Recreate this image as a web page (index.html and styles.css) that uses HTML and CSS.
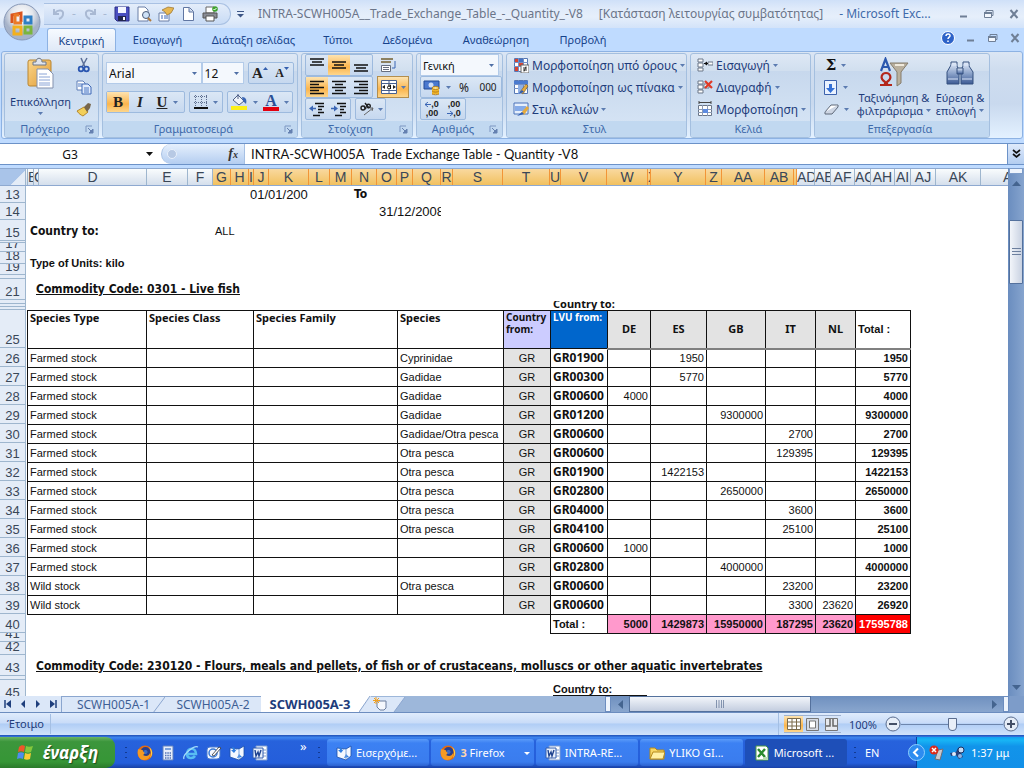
FILE: index.html
```html
<!DOCTYPE html>
<html lang="el">
<head>
<meta charset="utf-8">
<title>INTRA-SCWH005A - Microsoft Excel</title>
<link rel="stylesheet" href="styles.css">
</head>
<body>
<svg class="defs" aria-hidden="true">
<defs>
<linearGradient id="steel" x2="0" y2="1"><stop stop-color="#e8f0fc"/><stop offset=".5" stop-color="#8fa6cc"/><stop offset="1" stop-color="#3c5a94"/></linearGradient>
<linearGradient id="amber" x2="1" y2="1"><stop stop-color="#fbd68a"/><stop offset="1" stop-color="#e09b35"/></linearGradient>
<radialGradient id="orb" cy=".3"><stop stop-color="#fff"/><stop offset=".6" stop-color="#e3e6ec"/><stop offset="1" stop-color="#a6b3c9"/></radialGradient>
<radialGradient id="fox"><stop offset=".3" stop-color="#3a6cc8"/><stop offset=".5" stop-color="#2a3f8c"/></radialGradient>
</defs>
<symbol id="dn" viewBox="0 0 5 3"><path d="M0 0h5L2.500 3z" fill="#5b7bb0"/></symbol>
<symbol id="launch" viewBox="0 0 9 9"><path d="M1 7V1h6" fill="none" stroke="#7d97c2"/><path d="M3 3l4 4M8 4v4H4z" stroke="#6580b0" fill="#6580b0"/></symbol>
<symbol id="al" viewBox="0 0 16 16"><path d="M1 2.500h14M1 5.500h9M1 8.500h14M1 11.500h9M1 14.500h14" stroke="#111" stroke-width="1.300"/></symbol>
<symbol id="ac" viewBox="0 0 16 16"><path d="M1 2.500h14M4 5.500h8M1 8.500h14M4 11.500h8M1 14.500h14" stroke="#111" stroke-width="1.300"/></symbol>
<symbol id="ar" viewBox="0 0 16 16"><path d="M1 2.500h14M6 5.500h9M1 8.500h14M6 11.500h9M1 14.500h14" stroke="#111" stroke-width="1.300"/></symbol>
<symbol id="at" viewBox="0 0 16 16"><path d="M1 2h14M3 5h10M1 8h14" stroke="#111" stroke-width="1.600"/></symbol>
<symbol id="am" viewBox="0 0 16 16"><path d="M1 5h14M3 8h10M1 11h14" stroke="#111" stroke-width="1.600"/></symbol>
<symbol id="ab" viewBox="0 0 16 16"><path d="M1 8h14M3 11h10M1 14h14" stroke="#111" stroke-width="1.600"/></symbol>
<symbol id="ind" viewBox="0 0 16 16"><path d="M6 2.500h9M9 5.500h6M9 8.500h4M9 11.500h6M4 14.500h7" stroke="#111" stroke-width="1.500"/><path d="M0 7.500l4-3v6z" fill="#3b66b5"/><path d="M3 7.500h4" stroke="#3b66b5" stroke-width="1.500"/></symbol>
<symbol id="outd" viewBox="0 0 16 16"><path d="M6 2.500h9M9 5.500h6M9 8.500h4M9 11.500h6M4 14.500h7" stroke="#111" stroke-width="1.500"/><path d="M7 7.500l-4-3v6z" fill="#3b66b5"/><path d="M0 7.500h4" stroke="#3b66b5" stroke-width="1.500"/></symbol>
<symbol id="grid" viewBox="0 0 16 16"><path d="M1.500 1.500h13v13h-13z" fill="#fff" stroke="#5778b4"/><path d="M1 5.500h14M1 9.500h14M5.500 1v14M10.500 1v14" stroke="#7590c4"/></symbol>
<symbol id="firefox" viewBox="0 0 16 16"><circle cx="8" cy="8" r="7.500" fill="#e66a10"/><circle cx="8.500" cy="7" r="5" fill="url(#fox)"/><path d="M1 4c1 1 2 0 4 1 1 0 2 1 1 2 2 0 2 2 0 3 3 2 6 1 7-2 1 4-2 7-6 7C2 15 0 10 1 4z" fill="#f59a23"/><path d="M12 2c4 3 4 8 1 11 1-3 2-6-1-11z" fill="#ffd447"/></symbol>
<symbol id="mail" viewBox="0 0 16 16"><path d="M1 3l9 1 5-3v10l-5 4-9-3z" fill="#f4f8ff" stroke="#1c4fa8" stroke-width=".8"/><path d="M3 2c2 0 3 1 3 3l2-1-3 4-3-3 2 0zM8 13l2-4 3 3" fill="#2f7de0"/><path d="M10 4v10" stroke="#7aa4dd"/></symbol>
<symbol id="word" viewBox="0 0 16 16"><path d="M4 1h11v14H4z" fill="#fff" stroke="#7f9ccf"/><path d="M11 5h3M11 8h3M11 11h3" stroke="#7f9ccf"/><path d="M1 3h10v10H1z" fill="#e9f0fc" stroke="#345fae"/><path d="M3 5l1 6 2-4 1 4 2-6" fill="none" stroke="#1f438f" stroke-width="1.400"/></symbol>
<symbol id="min" viewBox="0 0 12 10"><path d="M2 7.500h7" stroke="#6f7f96" stroke-width="2"/></symbol>
<symbol id="res" viewBox="0 0 12 10"><path d="M3 3V1.500h7v5H9" fill="none" stroke="#6f7f96"/><path d="M1.500 3.500h7v5h-7z" fill="#f3f7fd" stroke="#6f7f96"/><path d="M1 4h8" stroke="#6f7f96" stroke-width="2"/></symbol>
<symbol id="x" viewBox="0 0 12 10"><path d="M2.500 1l7 8M9.500 1l-7 8" stroke="#6f7f96" stroke-width="2"/></symbol>
<symbol id="office" viewBox="0 0 38 38"><circle cx="19" cy="19" r="18" fill="url(#orb)" stroke="#8899b8"/><g fill="none" stroke-width="3"><path d="M9 20v-8l9-2v9" stroke="#d9541e"/><path d="M16 12h-4v8h7" stroke="#eb7a27"/><path d="M22 14h6v6h-6z" stroke="#2f7fc4"/><path d="M11 24h7v7h-7z" stroke="#f3b01c"/><path d="M22 24h6v6h-6z" stroke="#7bb53c"/></g></symbol>
</svg>

<header class="titlebar">
  <button class="b orb" aria-label="Office"><svg width="38" height="38"><use href="#office"/></svg></button>
  <div class="qat">
    <button class="b" aria-label="Undo"><svg width="14" height="14" viewBox="0 0 14 14"><path d="M2 2v5h5M3 6c3-4 9-3 8 1 0 2-2 4-4 5" fill="none" stroke="#a9b9d3" stroke-width="2"/></svg></button><span class="dash">-</span>
    <button class="b" aria-label="Redo"><svg width="14" height="14" viewBox="0 0 14 14"><path d="M12 2v5H7M11 6C8 2 2 3 3 7c0 2 2 4 4 5" fill="none" stroke="#a9b9d3" stroke-width="2"/></svg></button><span class="dash">-</span>
    <button class="b" aria-label="Save"><svg width="16" height="16" viewBox="0 0 16 16"><path d="M1 1h14v14H3l-2-2z" fill="#4a4fc0" stroke="#2b2f86"/><path d="M4 1h8v6H4z" fill="#f4f6ff"/><path d="M4 10h8v5H4z" fill="#22264f"/><path d="M9 11h2v3H9z" fill="#fff"/></svg></button>
    <button class="b" aria-label="Print preview"><svg width="16" height="16" viewBox="0 0 16 16"><path d="M2 1h7l3 3v11H2z" fill="#fff" stroke="#6a7fa6"/><circle cx="10" cy="9" r="3.500" fill="#cfe2f7" stroke="#4a5a78"/><path d="M12 12l3 3" stroke="#b07a3c" stroke-width="2"/></svg></button>
    <button class="b" aria-label="Properties"><svg width="16" height="16" viewBox="0 0 16 16"><path d="M1 7h10v8H1z" fill="#fff" stroke="#6a7fa6"/><path d="M3 10h2M6 10h4M3 12h2M6 12h4" stroke="#3a66b5"/><path d="M4 4l6-3 6 1-3 5-4 2-2-3z" fill="#e7b750" stroke="#96702a" stroke-width=".7"/></svg></button>
    <button class="b" aria-label="New"><svg width="16" height="16" viewBox="0 0 16 16"><path d="M3.500 1.500h6l4 4v9h-10z" fill="#fff" stroke="#6076a2"/><path d="M9 2v4h4" fill="#c9d7ee" stroke="#6076a2"/></svg></button>
    <button class="b" aria-label="Quick print"><svg width="16" height="16" viewBox="0 0 16 16"><path d="M4 1h8v6H4z" fill="#fff" stroke="#666"/><path d="M1 7h14v5H1z" fill="#8a8d96" stroke="#555"/><path d="M4 10h8v5H4z" fill="#fff" stroke="#555"/><circle cx="13" cy="3" r="2.800" fill="#3fa32f"/><path d="M11.500 3l1 1 2-2" fill="none" stroke="#fff"/></svg></button>
  </div>
  <button class="b more" aria-label="Customize"><svg width="7" height="7" viewBox="0 0 7 7"><path d="M0 .5h7" stroke="#3d5686"/><path d="M0 3h7L3.500 6.500z" fill="#3d5686"/></svg></button>
  <h1 class="title"><span>INTRA-SCWH005A__Trade_Exchange_Table_-_Quantity_-V8</span><span>[Κατάσταση λειτουργίας συμβατότητας]</span><span class="app">- Microsoft Exc...</span></h1>
  <div class="winbtns">
    <button class="b" aria-label="Minimize"><svg width="12" height="10"><use href="#min"/></svg></button>
    <button class="b" aria-label="Restore"><svg width="12" height="10"><use href="#res"/></svg></button>
    <button class="b" aria-label="Close"><svg width="12" height="10"><use href="#x"/></svg></button>
  </div>
</header>

<nav class="tabs">
  <button class="b tab on">Κεντρική</button>
  <button class="b tab t2">Εισαγωγή</button>
  <button class="b tab t3">Διάταξη σελίδας</button>
  <button class="b tab t4">Τύποι</button>
  <button class="b tab t5">Δεδομένα</button>
  <button class="b tab t6">Αναθεώρηση</button>
  <button class="b tab t7">Προβολή</button>
  <div class="winbtns">
    <button class="b" aria-label="Help"><svg width="14" height="14" viewBox="0 0 14 14"><circle cx="7" cy="7" r="6.500" fill="#2d62c8" stroke="#fff"/><path d="M5 5c0-3 4.500-2.500 4 0 0 1-2 1.500-2 3M7 9.500v1.500" fill="none" stroke="#fff" stroke-width="1.500"/></svg></button>
    <button class="b" aria-label="Minimize window"><svg width="12" height="10"><use href="#min"/></svg></button>
    <button class="b" aria-label="Restore window"><svg width="12" height="10"><use href="#res"/></svg></button>
    <button class="b" aria-label="Close window"><svg width="12" height="10"><use href="#x"/></svg></button>
  </div>
</nav>

<section class="ribbon">
  <div class="group g-clip">
    <div class="body">
      <button class="b big paste"><svg width="30" height="32" viewBox="0 0 30 32"><rect x="2" y="3" width="23" height="26" rx="2" fill="url(#amber)" stroke="#b98530"/><path d="M7 5h3c0-5 6-5 6 0h4v3H7z" fill="#dfe4ee" stroke="#6d7787"/><path d="M11 12h11l5 5v14H11z" fill="#fff" stroke="#8391ae"/><path d="M13 17h8M13 20h11M13 23h11M13 26h11M13 28h11" stroke="#8aa4d6"/></svg><span>Επικόλληση</span><svg class="dn"><use href="#dn"/></svg></button>
      <div class="col">
        <button class="b ic" aria-label="Cut"><svg width="16" height="16" viewBox="0 0 16 16"><path d="M5 1l4 9M11 1L6 10" stroke="#5b6f98" stroke-width="1.500"/><circle cx="5" cy="12" r="2.300" fill="none" stroke="#2a56b0" stroke-width="1.800"/><circle cx="10.500" cy="12" r="2.300" fill="none" stroke="#2a56b0" stroke-width="1.800"/></svg></button>
        <button class="b ic" aria-label="Copy"><svg width="16" height="16" viewBox="0 0 16 16"><path d="M1 2h6l2 2v7H1z" fill="#fff" stroke="#5f7fb8"/><path d="M6 5h6l3 3v7H6z" fill="#dfeafc" stroke="#3f68b5"/><path d="M8 9h5M8 11h5M8 13h5M2 5h4M2 7h4" stroke="#4d78c4"/></svg></button>
        <button class="b ic" aria-label="Format painter"><svg width="16" height="16" viewBox="0 0 16 16"><path d="M1 10l7-4 4 5-5 4c-2-1-4-2-6-5z" fill="#f2cf5a" stroke="#b4872e"/><path d="M8 6l4-4 3 1-1 4-3 4z" fill="#77664b"/></svg></button>
      </div>
    </div>
    <div class="cap"><span>Πρόχειρο</span><button class="b" aria-label="Clipboard options"><svg width="9" height="9"><use href="#launch"/></svg></button></div>
  </div>

  <div class="group g-font">
    <div class="body rows2">
      <div class="line">
        <select class="sel f1" aria-label="Font"><option>Arial</option></select><select class="sel f2" aria-label="Font size"><option>12</option></select>
        <div class="seg"><button class="b w22 ser">A<svg class="up" viewBox="0 0 5 3"><path d="M0 3h5L2.500 0z" fill="#335fae"/></svg></button><button class="b w22 ser small">A<svg class="up" viewBox="0 0 5 3"><path d="M0 0h5L2.500 3z" fill="#335fae"/></svg></button></div>
      </div>
      <div class="line">
        <div class="seg"><button class="b w22 ser hot">B</button><button class="b w22 ser"><i>I</i></button><button class="b w34 ser"><u>U</u><svg class="dn"><use href="#dn"/></svg></button></div>
        <div class="seg"><button class="b w32" aria-label="Borders"><svg width="14" height="14" viewBox="0 0 14 14"><path d="M1.500 0v13M7.500 0v13M12.500 0v13M0 1.500h13M0 7.500h13" stroke="#5f6f8f" stroke-dasharray="1 1"/><path d="M0 13h14" stroke="#111" stroke-width="2"/></svg><svg class="dn"><use href="#dn"/></svg></button></div>
        <div class="seg"><button class="b w32" aria-label="Fill"><svg width="17" height="18" viewBox="0 0 17 18"><path d="M2 7l5-5 6 6-5 4z" fill="#f0f4fb" stroke="#4c5f86"/><path d="M7 6V1" stroke="#4c5f86"/><path d="M11 4c4 0 5 3 4 7l-3-3z" fill="#3a66b5"/><path d="M0 13h16v4H0z" fill="#fbf019"/></svg><svg class="dn"><use href="#dn"/></svg></button><button class="b w32 fcol"><span>A</span><svg class="dn"><use href="#dn"/></svg></button></div>
      </div>
    </div>
    <div class="cap"><span>Γραμματοσειρά</span><button class="b" aria-label="Font options"><svg width="9" height="9"><use href="#launch"/></svg></button></div>
  </div>

  <div class="group g-align">
    <div class="body rows3">
      <div class="line">
        <div class="seg"><button class="b w22" aria-label="Top"><svg class="i14"><use href="#at"/></svg></button><button class="b w22 hot" aria-label="Middle"><svg class="i14"><use href="#am"/></svg></button><button class="b w22" aria-label="Bottom"><svg class="i14"><use href="#ab"/></svg></button></div>
        <button class="b w22" aria-label="Wrap text"><svg width="16" height="16" viewBox="0 0 16 16"><path d="M1 2h12M1 5h10" stroke="#8d8160" stroke-width="2"/><path d="M1.500 8.500h9v6h-9z" fill="#fff" stroke="#666f80"/><path d="M3 10.500h6M3 12.500h6" stroke="#666f80"/><path d="M15 4v5M12 11h3V9" fill="none" stroke="#3a66b5"/></svg></button>
      </div>
      <div class="line">
        <div class="seg"><button class="b w22 hot" aria-label="Left"><svg class="i14"><use href="#al"/></svg></button><button class="b w22" aria-label="Center"><svg class="i14"><use href="#ac"/></svg></button><button class="b w22" aria-label="Right"><svg class="i14"><use href="#ar"/></svg></button></div>
        <button class="b w32 hot merge" aria-label="Merge"><svg width="16" height="14" viewBox="0 0 16 14"><path d="M.5.500h15v13H.5z" fill="#fff" stroke="#465f8f"/><path d="M0 3.500h16M0 10.500h16M8 0v3M8 11v3" stroke="#465f8f"/><path d="M1 7l3-2v4zM15 7l-3-2v4z" fill="#222"/><circle cx="8" cy="7.500" r="1.500" fill="none" stroke="#111"/><path d="M7 5h2.500v4" fill="none" stroke="#111"/></svg><svg class="dn"><use href="#dn"/></svg></button>
      </div>
      <div class="line">
        <div class="seg"><button class="b w22" aria-label="Decrease indent"><svg class="i14"><use href="#ind"/></svg></button><button class="b w22" aria-label="Increase indent"><svg class="i14"><use href="#outd"/></svg></button></div>
        <div class="seg"><button class="b w30" aria-label="Orientation"><svg width="17" height="15" viewBox="0 0 17 15"><g fill="none" stroke="#222" stroke-width="1.400"><circle cx="4" cy="6" r="2"/><path d="M5 4l2 3M6 1l4 5"/><circle cx="9.500" cy="4" r="1.800"/></g><path d="M5 13L14 6M14 6l-1 3M14 6h-3" stroke="#666" fill="none"/></svg><svg class="dn"><use href="#dn"/></svg></button></div>
      </div>
    </div>
    <div class="cap"><span>Στοίχιση</span><button class="b" aria-label="Alignment options"><svg width="9" height="9"><use href="#launch"/></svg></button></div>
  </div>

  <div class="group g-num">
    <div class="body rows3">
      <div class="line"><select class="sel f3" aria-label="Number format"><option>Γενική</option></select></div>
      <div class="line"><div class="seg"><button class="b w32" aria-label="Currency"><svg width="18" height="17" viewBox="0 0 18 17"><path d="M1 2h15v8H1z" fill="#4a78cf" stroke="#234a97"/><circle cx="8" cy="6" r="2.500" fill="#cddcf6"/><path d="M9 9h7v6H9z" fill="#f0b429"/><ellipse cx="12.500" cy="9" rx="3.500" ry="1.500" fill="#ffe083" stroke="#b9811b"/><path d="M9 12c2 1.500 5 1.500 7 0M9 15c2 1 5 1 7 0" stroke="#b9811b" fill="none"/></svg><svg class="dn"><use href="#dn"/></svg></button><button class="b w22 n">%</button><button class="b w24 n"><span>000</span></button></div></div>
      <div class="line"><div class="seg"><button class="b w22 dec" aria-label="Increase decimal"><span><svg width="6" height="5" viewBox="0 0 6 5"><path d="M0 2.500h6M3 0L0 2.500 3 5" fill="none" stroke="#3b66b5"/></svg>,0</span><span>,00</span></button><button class="b w22 dec" aria-label="Decrease decimal"><span>,00</span><span><svg width="6" height="5" viewBox="0 0 6 5"><path d="M0 2.500h6M3 0l3 2.500L3 5" fill="none" stroke="#3b66b5"/></svg>,0</span></button></div></div>
    </div>
    <div class="cap"><span>Αριθμός</span><button class="b" aria-label="Number options"><svg width="9" height="9"><use href="#launch"/></svg></button></div>
  </div>

  <div class="group g-style">
    <div class="body rows3">
      <button class="b cmd"><svg width="16" height="16" viewBox="0 0 16 16"><use href="#grid"/><path d="M2 2h3v3H2zM6 6h4v3H6zM2 10h3v4H2z" fill="#d9442f"/><path d="M6 2h4v3H6z" fill="#4472c4"/><path d="M8 8h8v8H8z" fill="#fff" stroke="#666"/><path d="M10 11h4M10 13h4M13 9.500l-2 5" stroke="#333"/></svg>Μορφοποίηση υπό όρους<svg class="dn"><use href="#dn"/></svg></button>
      <button class="b cmd"><svg width="16" height="16" viewBox="0 0 16 16"><use href="#grid"/><path d="M1 2h14v3H1z" fill="#4b7bd0"/><path d="M5 6h5v9H5z" fill="#8fb0e6"/><path d="M7 13l6-8 2 2-5 8z" fill="#e5aa3d" stroke="#6b5a35" stroke-width=".6"/><path d="M5 15l4-4 2 2z" fill="#2c5bb5"/></svg>Μορφοποίηση ως πίνακα<svg class="dn"><use href="#dn"/></svg></button>
      <button class="b cmd"><svg width="16" height="16" viewBox="0 0 16 16"><path d="M1 2h14v11H1z" fill="#e6effc" stroke="#4b73b9"/><path d="M2 5h11v5H2z" fill="#86abe8"/><path d="M8 12l6-7 2 2-5 7z" fill="#e5aa3d"/><path d="M4 15l5-4 2 2z" fill="#2c5bb5"/></svg>Στυλ κελιών<svg class="dn"><use href="#dn"/></svg></button>
    </div>
    <div class="cap"><span>Στυλ</span></div>
  </div>

  <div class="group g-cells">
    <div class="body rows3">
      <button class="b cmd"><svg width="16" height="16" viewBox="0 0 16 16"><path d="M1 2h5v3H1zM1 6h5v4H1zM1 11h5v3H1zM11 5h5v3h-5z" fill="#fff" stroke="#6b7688"/><path d="M7 6.500h4" stroke="#111"/><path d="M7 6.500l3-2v4z" fill="#111"/></svg>Εισαγωγή<svg class="dn"><use href="#dn"/></svg></button>
      <button class="b cmd"><svg width="16" height="16" viewBox="0 0 16 16"><path d="M1 2h5v3H1zM1 6h5v4H1zM1 11h5v3H1zM7 5h5v4H7z" fill="#fff" stroke="#6b7688"/><path d="M8 2l7 7M15 2L8 9" stroke="#e03a25" stroke-width="2.200"/></svg>Διαγραφή<svg class="dn"><use href="#dn"/></svg></button>
      <button class="b cmd"><svg width="16" height="16" viewBox="0 0 16 16"><path d="M1.500 4.500h13v10h-13z" fill="#fff" stroke="#6b7688"/><path d="M1 8.500h14M1 11.500h14M5.500 4v11M10.500 4v11" stroke="#8b9ab5"/><path d="M6 8h5v4H6z" fill="#5d8be0"/><path d="M2 1.500h12M2 0v3M14 0v3" stroke="#444"/></svg>Μορφοποίηση<svg class="dn"><use href="#dn"/></svg></button>
    </div>
    <div class="cap"><span>Κελιά</span></div>
  </div>

  <div class="group g-edit">
    <div class="body">
      <div class="col wide">
        <button class="b ic sum">Σ<svg class="dn"><use href="#dn"/></svg></button>
        <button class="b ic" aria-label="Fill down"><svg width="14" height="15" viewBox="0 0 14 15"><path d="M.5.500h12v14H.5z" fill="#eaf2ff" stroke="#3c62ad"/><path d="M5 4h3v4h3l-4.500 5L2 8h3z" fill="#3470d6"/></svg><svg class="dn"><use href="#dn"/></svg></button>
        <button class="b ic" aria-label="Clear"><svg width="15" height="14" viewBox="0 0 15 14"><path d="M1 10l6-7h7l-6 7z" fill="#fff" stroke="#5e6878"/><path d="M1 10v2h7l6-7V3" fill="#cdd5e3" stroke="#5e6878"/></svg><svg class="dn"><use href="#dn"/></svg></button>
      </div>
      <button class="b big sort"><svg width="32" height="32" viewBox="0 0 32 32"><path d="M12 6h18l-7 9v11l-4 3V15z" fill="#b9b09e" stroke="#857c6c"/><path d="M17 8h9" stroke="#efe9dc" stroke-width="2"/><path d="M3 14L7.500 2 12 14M5 10h5" fill="none" stroke="#2c58ae" stroke-width="2.200"/><path d="M2 28h5v-3c-6-4-3-9 1-9s7 5 1 9v3h5" fill="none" stroke="#b3261b" stroke-width="2.200"/></svg><span>Ταξινόμηση &amp;</span><span>φιλτράρισμα<svg class="dn"><use href="#dn"/></svg></span></button>
      <button class="b big find"><svg width="30" height="32" viewBox="0 0 30 32"><g fill="url(#steel)" stroke="#34507f"><path d="M6 5h6v4l2 4v14H2V15l4-7zM18 5h6v4l4 6v12H16V13l2-4z"/><path d="M12 11h6v6h-6z"/></g><path d="M3 22h10M17 22h10M6 8h6M18 8h6" stroke="#dbe7fa"/></svg><span>Εύρεση &amp;</span><span>επιλογή<svg class="dn"><use href="#dn"/></svg></span></button>
    </div>
    <div class="cap"><span>Επεξεργασία</span></div>
  </div>
</section>

<section class="formula">
  <input class="name" aria-label="Name box" value="G3"><svg class="namearrow" viewBox="0 0 7 4"><path d="M0 0h7L3.500 4z" fill="#111"/></svg>
  <div class="fx"><span class="knob"></span><span class="f">f<small>x</small></span></div>
  <input class="expr" aria-label="Formula" value="INTRA-SCWH005A  Trade Exchange Table - Quantity -V8">
  <button class="b expand" aria-label="Expand"><svg width="9" height="10" viewBox="0 0 9 10"><path d="M1 1l3.500 3L8 1M1 5l3.500 3L8 5" fill="none" stroke="#111" stroke-width="1.700"/></svg></button>
</section>

<main class="work">
  <div class="sheetcol">
    <div class="cols">
      <span class="corner"></span><span></span><span>B</span><span>C</span><span>D</span><span>E</span><span>F</span><span class="s">G</span><span class="s">H</span><span class="s">I</span><span class="s">J</span><span class="s">K</span><span class="s">L</span><span class="s">M</span><span class="s">N</span><span class="s">O</span><span class="s">P</span><span class="s">Q</span><span class="s">R</span><span class="s">S</span><span class="s">T</span><span class="s">U</span><span class="s">V</span><span class="s">W</span><span class="s">X</span><span class="s">Y</span><span class="s">Z</span><span class="s">AA</span><span class="s">AB</span><span class="s"></span><span>AD</span><span>AE</span><span>AF</span><span>AG</span><span>AH</span><span>AI</span><span>AJ</span><span>AK</span><span class="last">AL</span>
    </div>
    <div class="sheet">
      <div class="nums">
        <span class="h17">13</span><span class="h17">14</span><span class="h21">15</span><span class="h2"></span><span class="h9">17</span><span class="h12">18</span><span class="h11">19</span><span class="h4"></span><span class="h21">21</span><span class="h4"></span><span class="h3"></span><span class="h3"></span><span class="h38">25</span><span>26</span><span>27</span><span>28</span><span>29</span><span>30</span><span>31</span><span>32</span><span>33</span><span>34</span><span>35</span><span>36</span><span>37</span><span>38</span><span>39</span><span>40</span><span class="h9">41</span><span class="h13">42</span><span class="h21">43</span><span class="h4"></span><span class="h21">45</span>
      </div>
      <div class="cells">
        <div class="dates h17"><span class="from">01/01/2008</span><b>To</b></div>
        <div class="dates h17"><span class="until">31/12/2008</span></div>
        <div class="where"><b class="tah">Country to:</b><span>ALL</span></div>
        <div class="units">Type of Units: kilo</div>
        <h2 class="code">Commodity Code: 0301 - Live fish</h2>
        <div class="cut"><span>Country to:</span></div>
        <table>
          <colgroup><col class="c119"><col class="c107"><col class="c144"><col class="c106"><col class="c47"><col class="c57"><col class="c43"><col class="c56"><col class="c59"><col class="c50"><col class="c40"><col class="c55"></colgroup>
          <thead><tr><th>Species Type</th><th>Species Class</th><th>Species Family</th><th>Species</th><th class="ctry">Country from:</th><th class="lvu">LVU from:</th><th class="k">DE</th><th class="k">ES</th><th class="k">GB</th><th class="k">IT</th><th class="k">NL</th><th class="tot">Total :</th></tr></thead>
          <tbody>
          <tr><td>Farmed stock</td><td></td><td></td><td>Cyprinidae</td><td>GR</td><td>GR01900</td><td></td><td>1950</td><td></td><td></td><td></td><td>1950</td></tr>
          <tr><td>Farmed stock</td><td></td><td></td><td>Gadidae</td><td>GR</td><td>GR00300</td><td></td><td>5770</td><td></td><td></td><td></td><td>5770</td></tr>
          <tr><td>Farmed stock</td><td></td><td></td><td>Gadidae</td><td>GR</td><td>GR00600</td><td>4000</td><td></td><td></td><td></td><td></td><td>4000</td></tr>
          <tr><td>Farmed stock</td><td></td><td></td><td>Gadidae</td><td>GR</td><td>GR01200</td><td></td><td></td><td>9300000</td><td></td><td></td><td>9300000</td></tr>
          <tr><td>Farmed stock</td><td></td><td></td><td>Gadidae/Otra pesca</td><td>GR</td><td>GR00600</td><td></td><td></td><td></td><td>2700</td><td></td><td>2700</td></tr>
          <tr><td>Farmed stock</td><td></td><td></td><td>Otra pesca</td><td>GR</td><td>GR00600</td><td></td><td></td><td></td><td>129395</td><td></td><td>129395</td></tr>
          <tr><td>Farmed stock</td><td></td><td></td><td>Otra pesca</td><td>GR</td><td>GR01900</td><td></td><td>1422153</td><td></td><td></td><td></td><td>1422153</td></tr>
          <tr><td>Farmed stock</td><td></td><td></td><td>Otra pesca</td><td>GR</td><td>GR02800</td><td></td><td></td><td>2650000</td><td></td><td></td><td>2650000</td></tr>
          <tr><td>Farmed stock</td><td></td><td></td><td>Otra pesca</td><td>GR</td><td>GR04000</td><td></td><td></td><td></td><td>3600</td><td></td><td>3600</td></tr>
          <tr><td>Farmed stock</td><td></td><td></td><td>Otra pesca</td><td>GR</td><td>GR04100</td><td></td><td></td><td></td><td>25100</td><td></td><td>25100</td></tr>
          <tr><td>Farmed stock</td><td></td><td></td><td></td><td>GR</td><td>GR00600</td><td>1000</td><td></td><td></td><td></td><td></td><td>1000</td></tr>
          <tr><td>Farmed stock</td><td></td><td></td><td></td><td>GR</td><td>GR02800</td><td></td><td></td><td>4000000</td><td></td><td></td><td>4000000</td></tr>
          <tr><td>Wild stock</td><td></td><td></td><td>Otra pesca</td><td>GR</td><td>GR00600</td><td></td><td></td><td></td><td>23200</td><td></td><td>23200</td></tr>
          <tr><td>Wild stock</td><td></td><td></td><td></td><td>GR</td><td>GR00600</td><td></td><td></td><td></td><td>3300</td><td>23620</td><td>26920</td></tr>
          </tbody>
          <tfoot><tr><td class="none" colspan="5"></td><td class="tl">Total :</td><td>5000</td><td>1429873</td><td>15950000</td><td>187295</td><td>23620</td><td class="grand">17595788</td></tr></tfoot>
        </table>
        <h2 class="code second">Commodity Code: 230120 - Flours, meals and pellets, of fish or of crustaceans, molluscs or other aquatic invertebrates</h2>
        <div class="again"><span>Country to:</span></div>
      </div>
    </div>
  </div>
  <div class="vscroll">
    <span class="split"></span>
    <button class="b" aria-label="Scroll up"><svg width="9" height="5" viewBox="0 0 9 5"><path d="M0 5h9L4.500 0z" fill="#44648f"/></svg></button>
    <span class="thumb"><svg width="9" height="8" viewBox="0 0 9 8"><path d="M0 .5h9M0 3.500h9M0 6.500h9" stroke="#6c7f9e"/></svg></span>
    <button class="b end" aria-label="Scroll down"><svg width="9" height="5" viewBox="0 0 9 5"><path d="M0 0h9L4.500 5z" fill="#44648f"/></svg></button>
  </div>
</main>

<div class="sheetbar">
  <div class="navs">
    <button class="b" aria-label="First sheet"><svg width="8" height="8" viewBox="0 0 8 8"><path d="M1 0v8" stroke="#1f3f7d" stroke-width="1.500"/><path d="M7 0v8L2 4z" fill="#1f3f7d"/></svg></button>
    <button class="b" aria-label="Previous sheet"><svg width="8" height="8" viewBox="0 0 8 8"><path d="M6 0v8L2 4z" fill="#1f3f7d"/></svg></button>
    <button class="b" aria-label="Next sheet"><svg width="8" height="8" viewBox="0 0 8 8"><path d="M2 0v8l4-4z" fill="#1f3f7d"/></svg></button>
    <button class="b" aria-label="Last sheet"><svg width="8" height="8" viewBox="0 0 8 8"><path d="M1 0v8l5-4z" fill="#1f3f7d"/><path d="M7 0v8" stroke="#1f3f7d" stroke-width="1.500"/></svg></button>
  </div>
  <button class="b stab w103"><span>SCWH005A-1</span><svg class="slope" viewBox="0 0 12 16"><path d="M0 16L12 0v16z" fill="#dbe7f8"/><path d="M0 16L12 0" stroke="#8ba6cf"/></svg></button>
  <button class="b stab w95"><span>SCWH005A-2</span></button>
  <button class="b stab cur"><span>SCWH005A-3</span></button>
  <button class="b newtab" aria-label="New sheet"><svg width="48" height="16" viewBox="0 0 48 16"><path d="M0 0h12L0 16z" fill="#fff"/><path d="M0 16L11 1h35L35 16z" fill="#dbe7f8"/><path d="M0 16L11 0M35 16L46 1" stroke="#8ba6cf"/><path d="M18 5h9v7l-2 2h-4l-3-3z" fill="#f5f8fd" stroke="#6d7f9e"/><path d="M17 1v7M14 4.500h7M15 2l5 5M20 2l-5 5" stroke="#f0a020"/></svg></button>
  <div class="fillbar"></div>
  <span class="split2"></span>
  <div class="hscroll">
    <button class="b" aria-label="Scroll left"><svg width="5" height="9" viewBox="0 0 5 9"><path d="M5 0v9L0 4.500z" fill="#44648f"/></svg></button>
    <span class="hthumb"><svg width="8" height="8" viewBox="0 0 8 8"><path d="M.5 0v8M3 0v8M5.500 0v8M7.500 0v8" stroke="#6c7f9e" stroke-width=".8"/></svg></span>
    <button class="b end" aria-label="Scroll right"><svg width="5" height="9" viewBox="0 0 5 9"><path d="M0 0v9l5-4.500z" fill="#44648f"/></svg></button>
  </div>
  <span class="split2"></span>
  <span class="cornerbox"></span>
</div>

<footer class="status">
  <span class="ready">Έτοιμο</span>
  <div class="views">
    <button class="b hot" aria-label="Normal"><svg width="14" height="12" viewBox="0 0 14 12"><path d="M.5.500h13v11H.5zM0 4h14M0 8h14M5 0v12M9.500 0v12" fill="#fff" stroke="#7a6a4a"/></svg></button>
    <button class="b" aria-label="Page layout"><svg width="13" height="13" viewBox="0 0 13 13"><path d="M.5.500h12v12H.5z" fill="#d6dbe4" stroke="#777"/><path d="M3.500 3h6v7h-6z" fill="#fff" stroke="#777"/></svg></button>
    <button class="b" aria-label="Page break"><svg width="13" height="13" viewBox="0 0 13 13"><path d="M.5.500h12v12H.5z" fill="#e6e9ee" stroke="#777"/><path d="M1 8h4V1M8 1v7h4" fill="none" stroke="#666" stroke-width="1.500"/></svg></button>
  </div>
  <span class="pct">100%</span>
  <button class="b" aria-label="Zoom out"><svg width="16" height="16" viewBox="0 0 16 16"><circle cx="8" cy="8" r="7" fill="#e6edf7" stroke="#5a6d8f"/><path d="M4 8h8" stroke="#444f66" stroke-width="2"/></svg></button>
  <input class="zoom" type="range" aria-label="Zoom" min="0" max="200" value="100">
  <button class="b" aria-label="Zoom in"><svg width="16" height="16" viewBox="0 0 16 16"><circle cx="8" cy="8" r="7" fill="#e6edf7" stroke="#5a6d8f"/><path d="M4 8h8M8 4v8" stroke="#444f66" stroke-width="2"/></svg></button>
</footer>

<footer class="taskbar">
  <button class="b start"><svg width="18" height="17" viewBox="0 0 18 17"><path d="M2 3c2-2 4-2 6-1L7 8C5 7 3 7 1 8z" fill="#f0562a"/><path d="M9 2c2 1 4 1 7 0l-2 6c-2 1-4 1-6 0z" fill="#86c83c"/><path d="M1 9c2-1 4-1 6 0l-1 6c-2-1-4-1-6 0z" fill="#4f8df0"/><path d="M8 9c2 1 4 1 6 0l-1 6c-2 1-4 1-6 0z" fill="#fbcb35"/></svg><span>έναρξη</span></button>
  <span class="grip"></span>
  <div class="quick">
    <button class="b" aria-label="Firefox"><svg width="16" height="16"><use href="#firefox"/></svg></button>
    <button class="b" aria-label="Calculator"><svg width="16" height="16" viewBox="0 0 16 16"><path d="M3 1h10v14H3z" fill="#e8eefb" stroke="#6382bd"/><path d="M5 3h6v2H5z" fill="#7ea3dd"/><path d="M5 8h6M5 10.500h6M5 13h6" stroke="#5173b5" stroke-width="1.500" stroke-dasharray="1.500 .8"/></svg></button>
    <button class="b" aria-label="Internet Explorer"><svg width="16" height="16" viewBox="0 0 16 16"><path d="M3 9h10c0-7-9-7-9 0 0 5 6 5 8 2" fill="none" stroke="#58bdf2" stroke-width="2.600"/><path d="M1 14C-1 10 11 0 15 2" fill="none" stroke="#a5dcfa" stroke-width="1.300"/></svg></button>
    <button class="b" aria-label="Desktop"><svg width="16" height="16" viewBox="0 0 16 16"><rect x="1" y="2" width="13" height="12" rx="3" fill="#f5f9ff" stroke="#4b7dd0"/><circle cx="7" cy="8" r="4" fill="none" stroke="#3a7bd8" stroke-width="1.500"/><path d="M6 10l7-8 2 1-7 8z" fill="#fff" stroke="#333" stroke-width=".8"/></svg></button>
    <button class="b" aria-label="Mail"><svg width="16" height="16"><use href="#mail"/></svg></button>
    <button class="b" aria-label="Word"><svg width="16" height="16"><use href="#word"/></svg></button>
  </div>
  <span class="chev">»</span>
  <span class="grip"></span>
  <div class="tasks">
    <button class="b task"><svg width="16" height="16"><use href="#mail"/></svg><span>Εισερχόμε...</span></button>
    <button class="b task"><svg width="16" height="16"><use href="#firefox"/></svg><span><b>3</b> Firefox</span><svg class="caret" viewBox="0 0 6 3"><path d="M0 0h6L3 3z" fill="#fff"/></svg></button>
    <button class="b task"><svg width="16" height="16"><use href="#word"/></svg><span>INTRA-RE...</span></button>
    <button class="b task"><svg width="16" height="16" viewBox="0 0 16 16"><path d="M1 3h5l2 2h7v9H1z" fill="#f6d664" stroke="#b58a1d"/><path d="M1 14l3-7h12l-2 7z" fill="#fff0a3" stroke="#b58a1d"/></svg><span>YLIKO GI...</span></button>
    <button class="b task active"><svg width="16" height="16" viewBox="0 0 16 16"><path d="M2 1h10l2 2v12H2z" fill="#fff" stroke="#4d9a45"/><path d="M4 4l7 8M11 4l-7 8" stroke="#2a8a2e" stroke-width="2.400"/><path d="M9 12h5v3H9z" fill="#b6dbb0"/></svg><span>Microsoft ...</span></button>
  </div>
  <span class="grip near"></span>
  <span class="lang">EN</span>
  <div class="tray">
    <button class="b hide" aria-label="Hide icons"><svg width="17" height="17" viewBox="0 0 17 17"><circle cx="8.500" cy="8.500" r="8" fill="#2d8cf0" stroke="#8fd0ff"/><path d="M10 4.500l-4 4 4 4" fill="none" stroke="#fff" stroke-width="2"/></svg></button>
    <svg width="16" height="16" viewBox="0 0 16 16"><path d="M6 14l3-9 5-1-3 11z" fill="#c9c9cf" stroke="#6d6d78"/><circle cx="5" cy="5" r="4.500" fill="#dd2a1b"/><path d="M3 3l4 4M7 3L3 7" stroke="#fff" stroke-width="1.500"/></svg>
    <svg width="16" height="14" viewBox="0 0 16 14"><path d="M1 7l6-1 2-4 5 1-2 4 2 4-4 2-3-4-5 1z" fill="#27427c"/><circle cx="12" cy="4" r="3" fill="#c8dcf4" stroke="#1a2f60"/><circle cx="5" cy="8" r="2" fill="#dfeaf8"/><circle cx="11" cy="10" r="2" fill="#8fb5e4"/></svg>
    <span class="time">1:37 μμ</span>
  </div>
</footer>
</body>
</html>
```

FILE: styles.css
```css
* { box-sizing: border-box; }
body {
  margin: 0;
  height: 100vh;
  display: flex;
  flex-direction: column;
  overflow: hidden;
  background: #bfdbff;
  font-family: "Noto Sans", "Open Sans", sans-serif;
  font-size: 12px;
  color: #1e3c7b;
}
.defs { position: absolute; width: 0; height: 0; }
.b { border: 0; padding: 0; margin: 0; background: none; font: inherit; color: inherit; display: flex; align-items: center; justify-content: center; white-space: nowrap; }
svg { flex: none; display: block; }
.dn { width: 5px; height: 3px; }

/* title bar */
.titlebar { height: 28px; flex: none; display: flex; align-items: center; background: linear-gradient(#cfe0f8, #dfeafa 30%, #e6effb 60%, #d3e3f9); position: relative; padding-right: 4px; }
.orb { position: absolute; left: 3px; top: 3px; z-index: 2; }
.qat { display: flex; align-items: center; gap: 6px; width: 187px; height: 22px; margin-left: 44px; padding-left: 8px; border: 1px solid #a9c1e3; border-left: 0; border-radius: 0 11px 11px 0; background: linear-gradient(#e4edfa, #c8dbf5); }
.dash { width: 4px; color: #a9b9d3; line-height: 16px; }
.dash + .b { margin-left: 1px; }
.more { margin: 0 14px 0 6px; }
.title { margin: 0; flex: 1; min-width: 0; overflow: hidden; display: flex; gap: 16px; font-size: 12px; line-height: 18px; font-weight: 400; color: #6b7589; white-space: nowrap; }
.title .app { color: #3e6aaa; }
.winbtns { margin-left: auto; display: flex; gap: 13px; align-items: center; }

/* ribbon tabs */
.tabs { height: 23px; flex: none; display: flex; padding: 0 3px 0 47px; background: #bfdbff; font-size: 11px; }
.tab { height: 23px; padding: 0 6px; color: #15428b; }
.tab.on { width: 69px; background: linear-gradient(#f6faff, #dfe9f7); border: 1px solid #8db2e3; border-bottom: 0; border-radius: 3px 3px 0 0; }
.t2 { width: 83px; }
.t3 { width: 109px; }
.t4 { width: 60px; }
.t5 { width: 79px; }
.t6 { width: 98px; }
.t7 { width: 76px; }
.tabs .winbtns { gap: 10px; height: 20px; }

/* ribbon */
.ribbon { height: 88px; flex: none; display: flex; gap: 3px; margin: 0 1px; padding: 1px 2px 0; border: 1px solid #8db2e3; border-radius: 3px; background: linear-gradient(#dbe6f4, #cfddef 20%, #c9d9ee 60%, #e3f1ff); }
.group { flex: none; display: flex; flex-direction: column; border: 1px solid #a4bfdf; border-radius: 3px; overflow: hidden; background: linear-gradient(#dee8f5, #d1dfef 20%, #c7d8ed 21%, #d8e6f6); }
.g-clip { width: 95px; }
.g-font { width: 196px; }
.g-align { width: 112px; }
.g-num { width: 87px; }
.g-style { width: 181px; }
.g-cells { width: 121px; }
.g-edit { width: 176px; }
.body { flex: 1; display: flex; padding: 0 3px; }
.cap { height: 16px; flex: none; display: flex; align-items: center; background: #c1d8f0; color: #3e6aaa; padding-right: 4px; font-size: 11px; line-height: 16px; }
.cap span { flex: 1; text-align: center; }
.big { flex-direction: column; justify-content: flex-start; line-height: 13px; font-size: 11px; }
.big span { display: flex; align-items: center; gap: 3px; }
.paste { width: 66px; padding-top: 3px; gap: 4px; }
.col { display: flex; flex-direction: column; }
.ic { height: 22px; width: 22px; gap: 5px; }
.wide .ic { width: 36px; }
.sum { font: bold 15px "DejaVu Serif", serif; color: #111; }
.sort { width: 80px; padding-top: 3px; }
.find { width: 52px; padding-top: 3px; }
.big > svg:first-child { margin-bottom: 2px; }
.rows2 { flex-direction: column; gap: 7px; padding-top: 8px; }
.rows3 { flex-direction: column; }
.line { display: flex; gap: 4px; height: 22px; flex: none; align-items: center; }
.seg { display: flex; height: 22px; border: 1px solid #9dbade; border-radius: 2px; background: linear-gradient(#dbe7f5, #c6d8ef); }
.seg .b { height: 20px; }
.w22 { width: 22px; }
.w24 { width: 26px; }
.w30 { width: 29px; gap: 2px; }
.w32 { width: 32px; gap: 5px; }
.w34 { width: 33px; gap: 6px; }
.merge { height: 22px; border: 1px solid #b38e4e; gap: 4px; }
.hot { background: linear-gradient(#fde3b0, #fbb54d 60%, #fdd68c); }
.i14 { width: 16px; height: 16px; }
.sel { appearance: none; height: 22px; border: 1px solid #b3cbe9; border-radius: 0; padding: 0 4px; margin: 0; font: 12px "Noto Sans", sans-serif; color: #111; background: #f4f8fd url("data:image/svg+xml,%3Csvg xmlns='http://www.w3.org/2000/svg' width='5' height='3'%3E%3Cpath d='M0 0h5L2.500 3z' fill='%234f6fa5'/%3E%3C/svg%3E") no-repeat right 4px center; }
.f1 { width: 97px; padding-left: 2px; }
.f2 { width: 43px; padding-left: 2px; margin-left: -4px; }
.f3 { width: 80px; padding-left: 2px; font-size: 11px; }
.ser { font: bold 15px "Liberation Serif", serif; color: #222; }
.ser.small { font-size: 12px; }
.up { width: 5px; height: 3px; margin-bottom: 9px; }
.fcol span { font: bold 16px/13px "Liberation Serif", serif; color: #2b4f97; border-bottom: 4px solid #e3000f; padding: 0 2px; }
.n { font-size: 12px; color: #222; }
.n span { font-size: 10px; }
.dec { flex-direction: column; font: bold 9px/9px "Liberation Sans", sans-serif; color: #222; }
.dec span { display: flex; align-items: center; }
.g-style .body, .g-cells .body { padding-left: 6px; }
.cmd { height: 22px; gap: 3px; justify-content: flex-start; align-self: flex-start; }

/* formula bar */
.formula { flex: none; height: 22px; margin: 4px 0 3px; display: flex; border: 1px solid #6c92c8; border-width: 1px 0; background: #fff; align-items: stretch; }
.formula input { border: 0; padding: 0; background: #fff; color: #111; font: 12px "Noto Sans", sans-serif; outline: 0; min-width: 0; }
.formula .name { width: 140px; text-align: center; }
.namearrow { width: 7px; height: 4px; margin: 8px 8px 0 6px; }
.fx { width: 84px; display: flex; align-items: center; justify-content: space-between; padding: 0 6px 0 5px; border-radius: 10px 0 0 10px; border: 1px solid #a6c0e4; border-width: 0 1px; background: linear-gradient(#e6f0fd, #b4cdf0); }
.knob { width: 10px; height: 10px; border-radius: 50%; background: #b7c9e4; border: 1px solid #e8f0fb; }
.f { font: italic bold 14px "Liberation Serif", serif; color: #333; }
.f small { font-size: 10px; }
.formula .expr { flex: 1; padding-left: 6px; font: 13px Lato, sans-serif; white-space: pre; }
.expand { width: 17px; background: linear-gradient(#dfeafb, #b3cdf0); border-left: 1px solid #6c92c8; }

/* worksheet */
.work { flex: 1; min-height: 0; display: flex; }
.sheetcol { flex: 1; min-width: 0; display: flex; flex-direction: column; background: #fff; }
.cols { height: 18px; flex: none; display: grid; grid-template-columns: 26px 2px 6px 5px 108px 41px 25px 18px 18px 5px 15px 40px 21px 22px 25px 20px 16px 28px 12px 50px 47px 11px 46px 41px 3px 55px 16px 43px 29px 3px 18px 16px 24px 16px 24px 16px 25px 45px 1fr; border: 1px solid #8ea9d0; border-width: 1px 0; background: #e4ecf7; }
.cols span { display: flex; justify-content: safe center; align-items: center; overflow: hidden; border-right: 1px solid #9eb6ce; background: linear-gradient(#f9fcfd, #d5dfec); font: 14px/16px "Liberation Sans", Arial, sans-serif; color: #3a4757; min-width: 0; }
.cols .s { background: linear-gradient(#f9d99f, #f1c15f); border-right-color: #f29536; }
.cols .corner { background: linear-gradient(135deg, #a9c4e9 65%, #e4ecf7 66%); }
.cols .last { justify-content: flex-start; padding-left: 22px; border: 0; }
.sheet { flex: 1; min-height: 0; display: flex; overflow: hidden; }
.nums { width: 26px; flex: none; background: #e4ecf7; border-right: 1px solid #9eb6ce; font: 13px/14px "Liberation Sans", Arial, sans-serif; color: #3a4757; }
.nums span { display: flex; height: 19px; align-items: flex-end; justify-content: center; overflow: hidden; border-bottom: 1px solid #9eb6ce; }
.nums .h2 { height: 2px; }
.nums .h3 { height: 3px; }
.nums .h4 { height: 4px; }
.nums .h9 { height: 9px; }
.nums .h11 { height: 11px; }
.nums .h12 { height: 12px; }
.nums .h13 { height: 13px; }
.h17, .nums .h17 { height: 17px; }
.nums .h21 { height: 21px; }
.nums .h38 { height: 38px; }
.cells { flex: 1; min-width: 0; overflow: hidden; color: #111; font: 11px/14px "Liberation Sans", Arial, sans-serif; }
.dates { display: flex; font-size: 13px; line-height: 17px; }
.from { margin-left: 224px; width: 58px; overflow: hidden; }
.dates b { margin-left: 46px; font: bold 12px/17px "DejaVu Sans Condensed", "Noto Sans", sans-serif; }
.until { margin-left: 353px; width: 62px; overflow: hidden; }
.tah, .code { font-family: "DejaVu Sans Condensed", "Noto Sans", sans-serif; font-size: 12px; font-weight: 700; }
.where { display: grid; grid-template-columns: 185px 1fr; height: 21px; padding-left: 4px; align-items: center; }
.units { padding: 15px 0 0 4px; height: 38px; font: bold 11px/14px "Liberation Sans", sans-serif; }
.code { margin: 0; padding-left: 10px; line-height: 20px; height: 22px; text-decoration: underline; white-space: nowrap; }
.cut { height: 9px; overflow: hidden; padding-left: 527px; font: bold 11px/5px "Noto Sans", sans-serif; }
.code.second { padding-top: 22px; height: 48px; }
.again { padding-left: 527px; font-weight: 700; }
.again span { display: inline-block; width: 94px; border-bottom: 1px solid #111; line-height: 11px; }
table { border-collapse: collapse; table-layout: fixed; width: 884px; margin-left: 1px; }
.c119 { width: 119px; }
.c107 { width: 107px; }
.c144 { width: 144px; }
.c106 { width: 106px; }
.c47 { width: 47px; }
.c57 { width: 57px; }
.c43 { width: 43px; }
.c56 { width: 56px; }
.c59 { width: 59px; }
.c50 { width: 50px; }
.c40 { width: 40px; }
.c55 { width: 55px; }
th, td { border: 1px solid #111; padding: 0 2px; height: 19px; line-height: 14px; text-align: right; white-space: nowrap; }
thead th { height: 38px; vertical-align: top; text-align: left; font: bold 11px/14px "Noto Sans", sans-serif; }
thead .ctry { background: #ccccff; white-space: normal; font-size: 10px; line-height: 12px; }
thead .lvu { background: #0066cc; color: #fff; font-size: 10px; line-height: 12px; }
thead .k { background: #e3e3e3; text-align: center; vertical-align: middle; border-bottom: 2px solid #808080; }
thead .tot { vertical-align: middle; border-bottom: 2px solid #808080; font: bold 11px/14px "Liberation Sans", sans-serif; }
tbody td:nth-child(-n+4) { text-align: left; }
tbody td:nth-child(5) { text-align: center; background: #e3e3e3; }
tbody td:nth-child(6) { text-align: left; font: bold 12px/14px "Noto Sans", sans-serif; }
tbody td:last-child { font-weight: 700; }
tfoot td { background: #ff99cc; font-weight: 700; }
tfoot .none { border: 0; background: none; }
tfoot .tl { background: #fff; text-align: left; }
tfoot .grand { background: #ff0000; color: #fff; }

.vscroll { width: 16px; flex: none; display: flex; flex-direction: column; align-items: center; background: linear-gradient(90deg, #6a8dbf, #86a4ce); }
.split { width: 14px; height: 6px; background: #eef4fc; border: 1px solid #7d9cc9; }
.vscroll .b { height: 18px; width: 16px; }
.thumb { width: 14px; height: 64px; margin-top: 28px; display: flex; align-items: center; justify-content: center; border: 1px solid #54719d; border-radius: 1px; background: linear-gradient(90deg, #f2f5fa, #c9d2e2); }
.vscroll .end { margin-top: auto; }

/* sheet tabs and horizontal scroll */
.sheetbar { height: 17px; flex: none; display: flex; background: #9db7da; border-bottom: 1px solid #6c8dbf; overflow: hidden; }
.navs { width: 62px; display: flex; align-items: center; justify-content: space-around; background: #dbe7f8; border-right: 1px solid #8ba6cf; }
.stab { background: #dbe7f8; color: #3e5f95; border-top: 1px solid #8ba6cf; position: relative; }
.w103 { width: 103px; }
.slope { position: absolute; right: 0; top: 0; width: 12px; height: 16px; }
.w95 { width: 96px; }
.cur { width: 98px; background: #fff; font-size: 13px; font-weight: 700; color: #1e3c7b; border-top: 0; }
.newtab { width: 48px; }
.fillbar { flex: 1; }
.split2 { width: 6px; flex: none; background: #eef4fc; border: 1px solid #6c8dbf; }
.hscroll { width: 392px; flex: none; display: flex; background: linear-gradient(#6f90bf, #89a6ce); }
.hscroll .b { width: 18px; }
.hthumb { width: 182px; display: flex; align-items: center; justify-content: center; border: 1px solid #54719d; background: linear-gradient(#f2f5fa, #c3cddf); }
.hscroll .end { margin-left: auto; }
.cornerbox { width: 15px; background: #7d9cc9; }

/* status bar */
.status { height: 22px; flex: none; display: flex; align-items: center; padding-right: 5px; background: linear-gradient(#e0ecfc, #c9dcf8 45%, #b0cdf5 50%, #d0e3fb); }
.ready { width: 51px; padding-left: 7px; font-size: 11px; line-height: 20px; border-right: 1px solid #a4bfe3; }
.views { margin-left: auto; display: flex; height: 22px; align-items: center; border-left: 1px solid #a4bfe3; padding-left: 5px; }
.views .b { width: 19px; height: 18px; border: 1px solid #9fb2d0; border-width: 1px 0; }
.pct { width: 36px; text-align: right; font-size: 11px; margin: 0 8px 0 0; }
.zoom { appearance: none; width: 102px; height: 16px; margin: 0; background: linear-gradient(#6d86ad, #6d86ad) center / 100% 1px no-repeat; }
.zoom::-webkit-slider-thumb { appearance: none; width: 9px; height: 13px; border: 1px solid #5a6d8f; border-radius: 1px 1px 5px 5px; background: #e9eff8; }

/* taskbar */
.taskbar { height: 33px; flex: none; display: flex; align-items: stretch; color: #fff; font-size: 11px; background: linear-gradient(#1f4fb5, #3d86f0 8%, #2762dc 18%, #245edb 85%, #1941a5); padding-top: 2px; }
.start { width: 115px; gap: 8px; font: italic bold 17px "Noto Sans", sans-serif; background: linear-gradient(#6cb565, #3c963c 15%, #369636 80%, #2a7a2a); border-radius: 0 9px 9px 0; text-shadow: 1px 1px 1px #1d4c1d; }
.start span { line-height: 24px; }
.grip { width: 4px; margin: 8px 0 6px 9px; background: radial-gradient(circle, #123a94 1px, transparent 1px) 0 0 / 4px 5px; }
.grip.near { margin-left: 6px; }
.quick { display: flex; margin-left: 9px; gap: 7px; }
.chev { margin-left: 32px; line-height: 18px; font-size: 13px; width: 8px; }
.tasks { flex: 1; min-width: 0; display: flex; gap: 2px; margin: 2px 0 2px 6px; }
.task { flex: 1; min-width: 0; justify-content: flex-start; gap: 4px; padding-left: 9px; border-radius: 3px; background: linear-gradient(#5b9bf9, #3c81f3 15%, #3a7cee 85%, #2c62cf); position: relative; }
.task b { color: #ffd6b0; }
.task.active { background: #1e4fb8; }
.caret { position: absolute; right: 4px; top: 13px; width: 6px; height: 3px; }
.lang { width: 59px; padding-left: 8px; line-height: 31px; }
.tray { width: 108px; flex: none; display: flex; align-items: center; gap: 4px; background: linear-gradient(#12a0f0, #18b5f5 10%, #1194ea 30%, #1290e8); border-left: 1px solid #0b3e9c; }
.tray .hide { margin-left: -9px; }
.time { margin-left: 2px; }
```
